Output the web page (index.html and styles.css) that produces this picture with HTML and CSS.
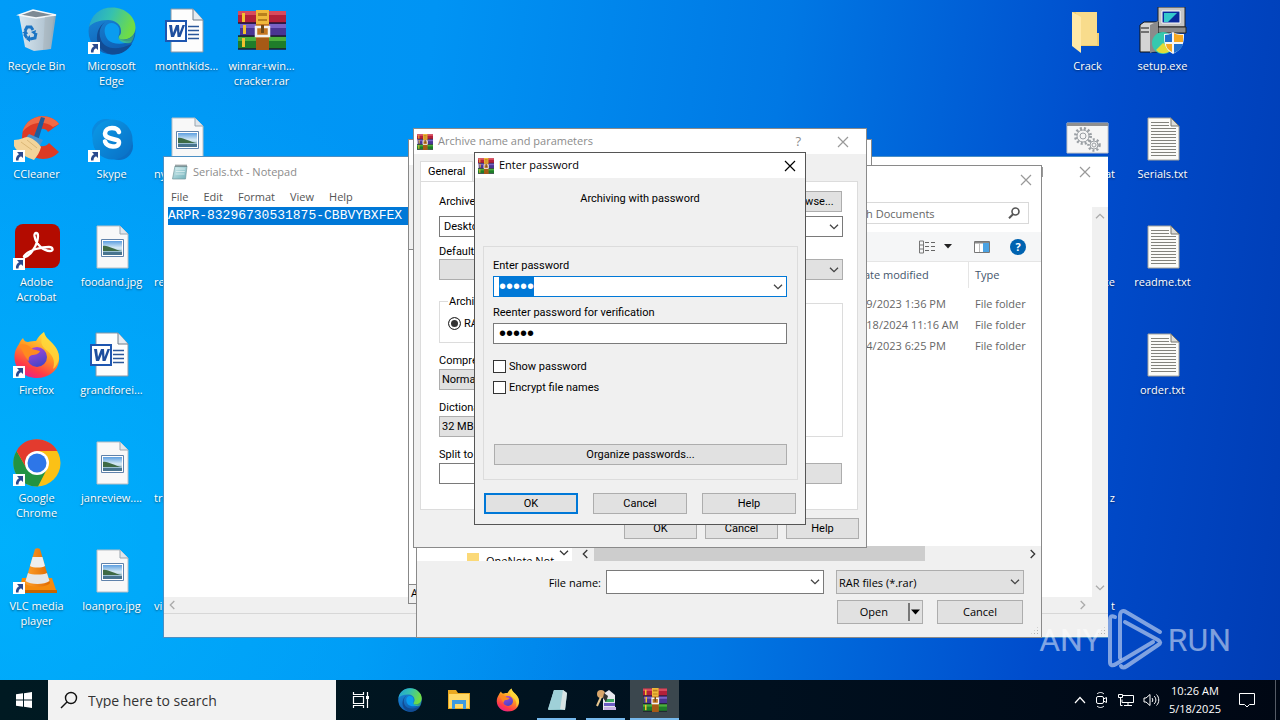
FILE: index.html
```
<!DOCTYPE html>
<html lang="en">

<head>
    <meta charset="UTF-8">
    <meta name="viewport" content="width=device-width, initial-scale=1.0">
    <title>Desktop</title>
    <link rel="stylesheet" href="styles.css">
</head>

<body>
    <!-- shared icons -->
    <svg class="sprite" aria-hidden="true">
        <defs>
            <linearGradient id="edgeA" x1="0" y1="0" x2="1" y2="0.3">
                <stop offset="0" stop-color="#1f9fd8"/>
                <stop offset="0.5" stop-color="#35c1b0"/>
                <stop offset="1" stop-color="#6fdc46"/>
            </linearGradient>
            <linearGradient id="edgeB" x1="0" y1="0" x2="0.4" y2="1">
                <stop offset="0" stop-color="#1b8ddc"/>
                <stop offset="1" stop-color="#0f5fb4"/>
            </linearGradient>
            <linearGradient id="foxA" x1="0.8" y1="0" x2="0.3" y2="1">
                <stop offset="0" stop-color="#fff04a"/>
                <stop offset="0.45" stop-color="#ff9a22"/>
                <stop offset="0.8" stop-color="#ff3b47"/>
                <stop offset="1" stop-color="#e8208c"/>
            </linearGradient>
            <linearGradient id="foxB" x1="0" y1="0" x2="0.4" y2="1">
                <stop offset="0" stop-color="#b646d8"/>
                <stop offset="1" stop-color="#4a45c8"/>
            </linearGradient>
            <linearGradient id="skypeA" x1="0" y1="0" x2="1" y2="1">
                <stop offset="0" stop-color="#0a9be8"/>
                <stop offset="1" stop-color="#0a6ec4"/>
            </linearGradient>
            <linearGradient id="skyA" x1="0" y1="0" x2="0" y2="1">
                <stop offset="0" stop-color="#5d9fe0"/>
                <stop offset="0.5" stop-color="#d8ebf5"/>
                <stop offset="1" stop-color="#5f93ad"/>
            </linearGradient>
            <linearGradient id="binA" x1="0" y1="0" x2="1" y2="0">
                <stop offset="0" stop-color="#e9edf0"/>
                <stop offset="0.65" stop-color="#c6ccd2"/>
                <stop offset="1" stop-color="#98a5b0"/>
            </linearGradient>
            <linearGradient id="padA" x1="0" y1="0" x2="1" y2="1">
                <stop offset="0" stop-color="#d3eef0"/>
                <stop offset="1" stop-color="#6fb0b9"/>
            </linearGradient>
            <linearGradient id="coneA" x1="0" y1="0" x2="1" y2="0">
                <stop offset="0" stop-color="#ffa02c"/>
                <stop offset="1" stop-color="#e06a00"/>
            </linearGradient>
        </defs>

        <symbol id="i-shortcut" viewBox="0 0 12 12">
            <path d="M0 0h12v12H0z" fill="#fff"/>
            <path d="M4 2h6v6L8 6.200C6.300 7 5.500 8.200 5.500 10.500H3C2.500 7.500 4 5.400 6 4.200z" fill="#2b4a8f"/>
        </symbol>

        <symbol id="i-bin" viewBox="0 0 48 48">
            <path d="M6 8 20 3l23 5-5 34-17 2-9-4z" fill="url(#binA)" opacity="0.92"/>
            <path d="M6 8 20 3l23 5-20 3z" fill="#7d8a94"/>
            <path d="M6 8 20 3l23 5-20 3z" fill="none" stroke="#f5f8fa" stroke-width="1.500"/>
            <path d="M32 10l9-1-5 33-6 1z" fill="#aab5bd" opacity="0.6"/>
            <g fill="none" stroke="#1c75c4" stroke-width="3">
                <path d="M12 24l2-4 4 0 2 3"/>
                <path d="M23 26l-1 5-5 1"/>
                <path d="M14 31l-2-3 1-3"/>
            </g>
            <path d="M18 25l5-2-1 5zM17 28v7l-4-3zM9 26l4-3 2 4z" fill="#1c75c4"/>
        </symbol>

        <symbol id="i-edge" viewBox="0 0 48 48">
            <circle cx="24" cy="24" r="23.500" fill="url(#edgeB)"/>
            <path d="M1 20C3 8 12 .500 24 .500c14 0 23.500 10 23.500 20 0 8-6 12-12 12-5 0-6-2-4-4 1-1 1.500-2.500 1.500-4.500 0-7-6-11-13-11C11 13 4 16 1 20z" fill="url(#edgeA)"/>
            <path d="M17 15c-5 4-7 11-4 18 4 9 15 11 31 4C38 46 28 50 19 46 10 42 7 33 10 24c1.500-4 4-7 7-9z" fill="#124c94"/>
            <path d="M31 21c-2-5-8-6-11-4-5 3-4 11 0 16 4 4 13 5 24 1.500C39 35 34 34 30.500 31c-1-1 2-4 .500-10z" fill="#0a9cf0"/>
            <path d="M31.500 28c-1.500 2 0 4.500 4 4.500 4.500 0 9-2 11-6-1 5-2 8-4 9.500-6 1-10-1-12-4z" fill="#5fd34c" opacity="0.500"/>
        </symbol>

        <symbol id="i-word" viewBox="3 0 48 48">
            <path d="M11 2h22l10 11v32H11z" fill="#fdfdfd" stroke="#8a97a5"/>
            <path d="M33 2v11h10" fill="#e6ebf0" stroke="#6f7c8a"/>
            <path d="M28 19.500h11M28 23.500h11M28 27.500h11M28 31.500h11" stroke="#2b579a" stroke-width="1.500"/>
            <path d="M5 13h22v22H5z" fill="#1e56b0"/>
            <path d="M7 15h18v18H7z" fill="#fff"/>
            <path d="M9 18h3l1 8 3-8h3l.500 8 3-8h2.500l-4.500 12h-3l-.500-7-3 7h-3z" fill="#1e4e9e"/>
        </symbol>

        <symbol id="i-rar" viewBox="0 0 48 40" preserveAspectRatio="none">
            <path d="M0 1h48v12H0z" fill="#b3203a"/>
            <path d="M0 1h48v4H0z" fill="#d84a5c"/>
            <path d="M2 13h46v13H2z" fill="#4a3592"/>
            <path d="M2 14h46v4H2z" fill="#7a62c4"/>
            <path d="M0 26h48v13H0z" fill="#1f7d2a"/>
            <path d="M0 27h48v4H0z" fill="#4caf3c"/>
            <path d="M4 3h3v9H4zM5 15h3v9H5zM4 28h3v9H4z" fill="#f2c22e"/>
            <path d="M0 12h48v2H0zM0 25h48v2H0zM0 38h48v2H0z" fill="#1d1230" opacity="0.700"/>
            <path d="M18 0h13v40H18z" fill="#c4761f"/>
            <path d="M18 0h13v14H18z" fill="#f0b93a"/>
            <path d="M18 28h13v12H18z" fill="#a65a16"/>
            <path d="M20 3h9v3h-9zM20 9h9v2h-9z" fill="#b8801c"/>
            <path d="M18 17h13v9H18z" fill="none" stroke="#f1f1f1" stroke-width="2.500"/>
            <path d="M24.500 15v8" stroke="#6d4a1a" stroke-width="3"/>
        </symbol>

        <symbol id="i-ccleaner" viewBox="0 0 48 48">
            <path d="M46 9C40 0 24-2 15 7c-8 8-8 23 0 31 8 8 23 8 31-1l-10-9c-4 5-11 4-13-1-2-4-2-8 1-11 3-3 9-3 11 1z" fill="#dd3a24"/>
            <path d="M46 9C40 0 24-2 15 7c-3 3-5 7-5.500 10C16 8 30 4 40 12z" fill="#f06a45"/>
            <path d="M28 2l4 1-8 26-5-2z" fill="#1f5c9c"/>
            <path d="M16 19l14 6-5 9-14-9z" fill="#4a93cf"/>
            <path d="M1 25c7 0 10-3 13-3 4 0 12 6 14 10-1 5-4 9-7 13-6-2-17-7-20-14z" fill="#f3d49a"/>
            <path d="M8 27l11 8M14 25l10 8" stroke="#dab777" fill="none"/>
        </symbol>

        <symbol id="i-skype" viewBox="0 0 48 48">
            <circle cx="18" cy="18" r="14" fill="#0a8ade"/>
            <circle cx="31" cy="31" r="14" fill="#0b6fc4"/>
            <circle cx="24.500" cy="24.500" r="20" fill="url(#skypeA)"/>
            <path d="M31 17c-1-3-4-4-7-4-4 0-7 2-7 5.500 0 7 14 4 14 9 0 6-12 5-14-1" fill="none" stroke="#fff" stroke-width="4.500" stroke-linecap="round"/>
        </symbol>

        <symbol id="i-picture" viewBox="0 0 48 48">
            <path d="M9 3h23l8 8v34H9z" fill="#f8f8f8" stroke="#b8bec4"/>
            <path d="M32 3v8h8" fill="#dfe6ec" stroke="#9aa5ae"/>
            <path d="M13.500 16.500h22v17h-22z" fill="#fff" stroke="#5f82ab"/>
            <path d="M15 18h19v14H15z" fill="url(#skyA)"/>
            <path d="M15 23c5-1 11 4 19 5H15z" fill="#3e6a45"/>
            <path d="M15 29h19v3H15z" fill="#48748f"/>
        </symbol>

        <symbol id="i-text" viewBox="0 0 48 48">
            <path d="M9 3h23l8 8v34H9z" fill="#fbfbf8" stroke="#a3a39c"/>
            <path d="M32 3v8h8z" fill="#dcdcd8" stroke="#77776f"/>
            <path d="M12 7.500h18M12 10.500h18M12 13.500h25M12 16.500h25M12 19.500h25M12 22.500h25M12 25.500h25M12 28.500h25M12 31.500h25M12 34.500h25M12 37.500h25M12 40.500h25" stroke="#83837c"/>
        </symbol>

        <symbol id="i-acrobat" viewBox="0 0 48 48">
            <rect x="2" y="1" width="45" height="44" rx="8" fill="#b30b00"/>
            <path d="M12 34c5-1 13-12 13-21 0-4-4-4-3.500 0C23 22 31 28 37 28c4 0 3-4-1-4-8 0-19 3-23 7-2 2-3 3-1 3z" fill="none" stroke="#fff" stroke-width="2.300"/>
        </symbol>

        <symbol id="i-firefox" viewBox="0 0 48 48">
            <path d="M6 13c1-3 3-5 4-6 1 3 3 4 5 4 3-1 6-1 8-1 2-4 5-7 8-9 1 5 4 7 8 11 5 5 8 11 7 18-1 10-11 17-22 17C11 47 2 38 1.500 27 1.300 20 4 16 6 13z" fill="url(#foxA)"/>
            <path d="M31 1c1 5 4 7 8 11 5 5 7 10 7 16-1 4-3 8-6 10 3-9-1-15-8-20-3-3-6-7-1-17z" fill="#ffd93b" opacity="0.800"/>
            <circle cx="24" cy="26" r="10" fill="url(#foxB)"/>
            <path d="M6 14c5-2 10 0 13 4l8 2c-1 3-5 4-8 4-3 1-4 3-3 6-4-3-6-10-10-16z" fill="#ff8a1f"/>
        </symbol>

        <symbol id="i-chrome" viewBox="0 0 48 48">
            <circle cx="24" cy="24" r="23.500" fill="#fbc116"/>
            <path d="M3.600 12A23.500 23.500 0 0 0 25 47.500L34 30 14 30z" fill="#229342"/>
            <path d="M3.600 12 14 30l10-18h20.400C36-3 12-4 3.600 12z" fill="#e33b2e"/>
            <circle cx="24" cy="24" r="12" fill="#fff"/>
            <circle cx="24" cy="24" r="9.500" fill="#2d76e8"/>
        </symbol>

        <symbol id="i-vlc" viewBox="0 0 48 48">
            <path d="M9 31h30l5 15H6z" fill="#f58a0c"/>
            <path d="M6 43h38v3H6z" fill="#c96500"/>
            <path d="M22 2c1-1 4-1 5 0l10 34c-4 5-21 5-25 0z" fill="url(#coneA)"/>
            <path d="M19.500 10h10l2.500 9c-3 2-12 2-15 0z" fill="#eee"/>
            <path d="M15 26c4 2 15 2 19 0l2.500 8c-5 4-19 4-24 0z" fill="#e6e6e6"/>
        </symbol>

        <symbol id="i-folder" viewBox="0 0 48 48">
            <path d="M8 5h25v21h2v13H16z" fill="#f0cf72"/>
            <path d="M12 5h21v33H14z" fill="#f8dc8c"/>
            <path d="M8 5l9 5v36l-9-7z" fill="#ffe9a8"/>
        </symbol>

        <symbol id="i-setup" viewBox="0 0 48 48">
            <path d="M19 0h27v20H19z" fill="#c4c4c4" stroke="#222"/>
            <path d="M23 4h18v12H23z" fill="#0a2a9c" stroke="#fff"/>
            <path d="M25 6h13l-9 9h-4z" fill="#35c8cc"/>
            <path d="M17 20h30v6H17z" fill="#8a8a8a" stroke="#222"/>
            <path d="M1 18l4-3h14v30H1z" fill="#d4d4d4" stroke="#111"/>
            <path d="M11 18l8-4v29l-8 3z" fill="#8b8b8b"/>
            <path d="M2 21h8M2 25h8" stroke="#111"/>
            <circle cx="24" cy="36" r="11" fill="#36c9ae"/>
            <path d="M24 36l9 6c-5 6-13 5-16 1z" fill="#e4dc38"/>
            <path d="M25 27c4 0 7-1 9-2 3 2 6 2 11 2 0 9-1 15-11 20-9-5-9-12-9-20z" fill="#f4f4f4"/>
            <path d="M26 28c3 0 5-1 7-2v9h-7z" fill="#1f6fd0"/>
            <path d="M35 26c3 2 6 2 9 2v7h-9zM27 37h6v8c-4-2-6-5-6-8z" fill="#f6a821"/>
            <path d="M35 37h9c-1 4-4 7-9 9z" fill="#1f6fd0"/>
        </symbol>

        <symbol id="i-batch" viewBox="0 0 48 48">
            <path d="M3 8h41v30H3z" fill="#f5f5f5" stroke="#c7c7c7"/>
            <path d="M3 8h41v3H3z" fill="#8f8f8f"/>
            <g fill="none" stroke="#9a9fa4">
                <circle cx="19" cy="21" r="7.500" stroke-width="3" stroke-dasharray="2 2"/>
                <circle cx="19" cy="21" r="6"/>
                <circle cx="19" cy="21" r="3"/>
                <circle cx="30" cy="30" r="5.500" stroke-width="2.500" stroke-dasharray="2 2"/>
                <circle cx="30" cy="30" r="4"/>
                <circle cx="30" cy="30" r="2"/>
            </g>
        </symbol>

        <symbol id="i-notepad" viewBox="0 0 16 16">
            <path d="M3 2h12l-1.500 13H.500z" fill="url(#padA)" stroke="#73979b" stroke-width="0.700"/>
            <path d="M4 5h9M3.800 7.500h9M3.500 10h9" stroke="#f0fafa" stroke-width="0.600"/>
            <path d="M4 .500v2.500M6 .500v2.500M8 .500v2.500M10 .500v2.500M12 .500v2.500M14 .500v2.500" stroke="#4c5658" stroke-width="0.800"/>
        </symbol>

        <symbol id="i-close" viewBox="0 0 12 12">
            <path d="M1 1l10 10M11 1L1 11" fill="none" stroke="currentColor" stroke-width="1.200"/>
        </symbol>

        <symbol id="i-down" viewBox="0 0 10 6">
            <path d="M1 .700l4 4 4-4" fill="none" stroke="currentColor" stroke-width="1.300"/>
        </symbol>
    </svg>

    <main class="desktop">
        <ul class="icons icons-left">
            <li><svg><use href="#i-bin"/></svg><span>Recycle Bin</span></li>
            <li><svg><use href="#i-ccleaner"/></svg><svg class="shortcut"><use href="#i-shortcut"/></svg><span>CCleaner</span></li>
            <li><svg><use href="#i-acrobat"/></svg><svg class="shortcut"><use href="#i-shortcut"/></svg><span>Adobe Acrobat</span></li>
            <li><svg><use href="#i-firefox"/></svg><svg class="shortcut"><use href="#i-shortcut"/></svg><span>Firefox</span></li>
            <li><svg><use href="#i-chrome"/></svg><svg class="shortcut"><use href="#i-shortcut"/></svg><span>Google Chrome</span></li>
            <li><svg><use href="#i-vlc"/></svg><svg class="shortcut"><use href="#i-shortcut"/></svg><span>VLC media player</span></li>

            <li><svg><use href="#i-edge"/></svg><svg class="shortcut"><use href="#i-shortcut"/></svg><span>Microsoft Edge</span></li>
            <li><svg><use href="#i-skype"/></svg><svg class="shortcut"><use href="#i-shortcut"/></svg><span>Skype</span></li>
            <li><svg><use href="#i-picture"/></svg><span>foodand.jpg</span></li>
            <li><svg><use href="#i-word"/></svg><span>grandforei...</span></li>
            <li><svg><use href="#i-picture"/></svg><span>janreview....</span></li>
            <li><svg><use href="#i-picture"/></svg><span>loanpro.jpg</span></li>

            <li><svg><use href="#i-word"/></svg><span>monthkids...</span></li>
            <li><svg><use href="#i-picture"/></svg><span class="from-left">ny</span></li>
            <li><span class="from-left">re</span></li>
            <li></li>
            <li><span class="from-left">tru</span></li>
            <li><span class="from-left">vi</span></li>

            <li><svg class="wide"><use href="#i-rar"/></svg><span>winrar+win... cracker.rar</span></li>
        </ul>

        <ul class="icons icons-right">
            <li><svg><use href="#i-folder"/></svg><span>Crack</span></li>
            <li><svg><use href="#i-batch"/></svg><span class="from-right">at</span></li>
            <li><span class="from-right">xe</span></li>
            <li></li>
            <li><span class="from-right">z</span></li>
            <li><span class="from-right">t</span></li>

            <li><svg><use href="#i-setup"/></svg><span>setup.exe</span></li>
            <li><svg><use href="#i-text"/></svg><span>Serials.txt</span></li>
            <li><svg><use href="#i-text"/></svg><span>readme.txt</span></li>
            <li><svg><use href="#i-text"/></svg><span>order.txt</span></li>
        </ul>

        <!-- Notepad -->
        <section class="window notepad">
            <header class="titlebar">
                <svg class="app-icon"><use href="#i-notepad"/></svg>
                <h2>Serials.txt - Notepad</h2>
                <button class="maximize" aria-label="Maximize"></button>
                <button class="close" aria-label="Close"><svg><use href="#i-close"/></svg></button>
            </header>
            <nav class="menubar">
                <button>File</button>
                <button>Edit</button>
                <button>Format</button>
                <button>View</button>
                <button>Help</button>
            </nav>
            <div class="editor">
                <textarea aria-label="Text" spellcheck="false" wrap="off">ARPR-83296730531875-CBBVYBXFEX</textarea>
                <div class="scroll-y">
                    <svg class="flip"><use href="#i-down"/></svg>
                    <svg><use href="#i-down"/></svg>
                </div>
            </div>
            <div class="scroll-x">
                <svg class="turn-left"><use href="#i-down"/></svg>
                <svg class="turn-right"><use href="#i-down"/></svg>
            </div>
            <footer class="statusbar"></footer>
            <i class="grip"></i>
        </section>

        <!-- WinRAR main window, mostly covered -->
        <section class="window winrar">
            <div class="winrar-title"></div>
            <div class="winrar-tools"></div>
            <div class="winrar-list"></div>
            <div class="winrar-status">A</div>
        </section>

        <!-- Browse for archive -->
        <section class="window browse">
            <header class="titlebar">
                <button class="close" aria-label="Close"><svg><use href="#i-close"/></svg></button>
            </header>
            <div class="address">
                <div class="search">
                    <input type="text" placeholder="Search Documents" aria-label="Search Documents">
                    <svg viewBox="0 0 12 12"><circle cx="7.500" cy="4.500" r="3.500" fill="none" stroke="#555" stroke-width="1.600"/><path d="M5 7.200 1 11.200" stroke="#555" stroke-width="2"/></svg>
                </div>
            </div>
            <div class="toolbar">
                <button aria-label="Change view">
                    <svg width="17" height="14" viewBox="0 0 17 14"><path d="M.500 1h4v12h-4zM.500 5h4M.500 9h4" fill="none" stroke="#777"/><path d="M6 2.500h4M12 2.500h4M6 6.500h4M12 6.500h4M6 10.500h4M12 10.500h4" stroke="#666"/></svg>
                </button>
                <button aria-label="More views"><svg width="8" height="5" viewBox="0 0 8 5"><path d="M0 0h8L4 4.500z" fill="#222"/></svg></button>
                <button class="pane" aria-label="Preview pane">
                    <svg width="16" height="12" viewBox="0 0 16 12"><path d="M.500.500h15v11H.500z" fill="#fff" stroke="#777"/><path d="M1 1h14v1.500H1z" fill="#888"/><path d="M9 2h6v9H9z" fill="#4ba3e3"/><path d="M5.500 2v9" stroke="#bbb"/></svg>
                </button>
                <button class="help" aria-label="Help">?</button>
            </div>
            <div class="files">
                <div class="tree">
                    <div class="tree-item"><i></i>OneNote Not</div>
                    <svg><use href="#i-down"/></svg>
                </div>
                <table>
                    <thead>
                        <tr><th>Name</th><th>Date modified</th><th>Type</th></tr>
                    </thead>
                    <tbody>
                        <tr><td></td><td>1/9/2023 1:36 PM</td><td>File folder</td></tr>
                        <tr><td></td><td>1/18/2024 11:16 AM</td><td>File folder</td></tr>
                        <tr><td></td><td>1/4/2023 6:25 PM</td><td>File folder</td></tr>
                    </tbody>
                </table>
                <div class="files-scroll">
                    <svg class="turn-left"><use href="#i-down"/></svg>
                    <div class="thumb"></div>
                    <svg class="turn-right"><use href="#i-down"/></svg>
                </div>
            </div>
            <div class="file-row">
                <label for="filename">File name:</label>
                <div class="combo file-name">
                    <input type="text" id="filename">
                    <svg><use href="#i-down"/></svg>
                </div>
                <div class="combo file-type">
                    <select aria-label="File type"><option>RAR files (*.rar)</option></select>
                    <svg><use href="#i-down"/></svg>
                </div>
            </div>
            <div class="file-actions">
                <button class="btn open">Open<svg width="14" height="18" viewBox="0 0 14 18"><path d="M1 0v18" stroke="#555" stroke-width="1.500"/><path d="M3 6.500h9L7.500 11.500z" fill="#000"/></svg></button>
                <button class="btn">Cancel</button>
            </div>
            <i class="grip"></i>
        </section>

        <!-- Archive name and parameters -->
        <section class="window dialog archive">
            <header class="titlebar">
                <svg class="app-icon"><use href="#i-rar"/></svg>
                <h2>Archive name and parameters</h2>
                <button class="question" aria-label="What's this">?</button>
                <button class="close" aria-label="Close"><svg><use href="#i-close"/></svg></button>
            </header>
            <div class="tabs"><button>General</button></div>
            <div class="page">
                <div class="line name-line">
                    <label for="archname">Archive name</label>
                    <button class="btn">Browse...</button>
                </div>
                <div class="combo">
                    <input type="text" id="archname" value="Desktop">
                    <svg><use href="#i-down"/></svg>
                </div>
                <div class="caption">Default Profile</div>
                <div class="line">
                    <button class="btn profile" aria-label="Profiles"></button>
                    <div class="combo update">
                        <select aria-label="Update mode"><option></option></select>
                        <svg><use href="#i-down"/></svg>
                    </div>
                </div>
                <div class="columns">
                    <div class="col">
                        <fieldset>
                            <legend>Archive format</legend>
                            <label><input type="radio" name="format" checked>RAR</label>
                        </fieldset>
                        <label for="method">Compression method</label>
                        <div class="combo"><select id="method"><option>Normal</option></select></div>
                        <label for="dict">Dictionary size</label>
                        <div class="combo"><select id="dict"><option>32 MB</option></select></div>
                        <label for="split">Split to volumes, size</label>
                        <div class="combo"><input type="text" id="split"></div>
                    </div>
                    <div class="col">
                        <div class="options"></div>
                        <button class="btn" aria-label="Set password"></button>
                    </div>
                </div>
            </div>
            <footer>
                <button class="btn">OK</button>
                <button class="btn">Cancel</button>
                <button class="btn">Help</button>
            </footer>
        </section>

        <!-- Enter password -->
        <section class="window dialog password">
            <header class="titlebar">
                <svg class="app-icon"><use href="#i-rar"/></svg>
                <h2>Enter password</h2>
                <button class="close" aria-label="Close"><svg><use href="#i-close"/></svg></button>
            </header>
            <p>Archiving with password</p>
            <div class="group">
                <label for="pass">Enter password</label>
                <div class="combo">
                    <input type="password" id="pass" value="12345">
                    <svg><use href="#i-down"/></svg>
                </div>
                <label for="again">Reenter password for verification</label>
                <input type="password" id="again" value="12345">
                <label class="check"><input type="checkbox">Show password</label>
                <label class="check"><input type="checkbox">Encrypt file names</label>
                <button class="btn organize">Organize passwords...</button>
            </div>
            <footer>
                <button class="btn default">OK</button>
                <button class="btn">Cancel</button>
                <button class="btn">Help</button>
            </footer>
        </section>

        <div class="watermark">
            <span>ANY</span>
            <svg width="56" height="64" viewBox="0 0 56 64" fill="none" stroke="currentColor" stroke-width="4" stroke-linejoin="round" stroke-linecap="round">
                <path d="M8 9C4 7 3 9 3 12v42c0 4 3 4 6 2l37-22"/>
                <path d="M13 50V8c0-5 3-6 6-4l34 20"/>
                <path d="M18 14l33 18c3 2 3 3 0 5L20 58c-3 2-5 2-6 0"/>
            </svg>
            <span>RUN</span>
        </div>
    </main>

    <footer class="taskbar">
        <button class="start" aria-label="Start">
            <svg width="16" height="16" viewBox="0 0 16 16"><path d="M0 2.300 7 1.300v6.200H0zM8 1.200 16 0v7.500H8zM0 8.500h7v6.200l-7-1zM8 8.500h8V16l-8-1.200z" fill="#fff"/></svg>
        </button>
        <label class="task-search">
            <svg width="18" height="18" viewBox="0 0 18 18"><circle cx="11" cy="7" r="5.500" fill="none" stroke="#111" stroke-width="1.400"/><path d="M7 11 1 17" stroke="#111" stroke-width="1.400"/></svg>
            <input type="text" placeholder="Type here to search" aria-label="Search">
        </label>
        <button aria-label="Task view">
            <svg width="18" height="16" viewBox="0 0 18 16"><path d="M1.500 4.500h10v7h-10zM1.500 0v2.500h10V0M1.500 16v-2.500h10V16M15.500 0v16" fill="none" stroke="#fff" stroke-width="1.200"/><path d="M14 4h3v3h-3z" fill="#fff"/></svg>
        </button>
        <button aria-label="Edge"><svg width="24" height="24"><use href="#i-edge"/></svg></button>
        <button aria-label="File Explorer">
            <svg width="22" height="20" viewBox="0 0 22 20"><path d="M0 0h8l2 3h12v16H0z" fill="#e9a820"/><path d="M1 4h20v14H1z" fill="#ffd968"/><path d="M4 10h14v9h-3v-5H7v5H4z" fill="#3d9ae0"/></svg>
        </button>
        <button aria-label="Firefox"><svg width="24" height="24"><use href="#i-firefox"/></svg></button>
        <button class="running" aria-label="Notepad">
            <svg width="22" height="22" viewBox="0 0 22 22"><path d="M8 1h9l4 3-2 17H2z" fill="url(#padA)"/><path d="M8 1h9l-3 19H2z" fill="#9fd0d8"/><path d="M17 1l4 3-2 17-5-1z" fill="#d8e4e4"/></svg>
        </button>
        <button class="running" aria-label="Password recovery">
            <svg width="22" height="22" viewBox="0 0 22 22"><path d="M8 5l6-4 6 5v15H8z" fill="#e8e8ee"/><path d="M10 10h9v3h-9z" fill="#3fa860"/><path d="M9 14h11v3H9z" fill="#6c5cc4"/><path d="M9 18h12v3H9z" fill="#c9b4e4"/><circle cx="6" cy="5" r="4" fill="#d8a56a"/><path d="M6 8 2 17" stroke="#e8c890" stroke-width="2"/><path d="M9 4l4 3-2 6-3-4z" fill="#333"/></svg>
        </button>
        <button class="running active" aria-label="WinRAR"><svg width="24" height="24"><use href="#i-rar"/></svg></button>

        <div class="tray">
            <svg width="12" height="8" viewBox="0 0 12 8"><path d="M1 7l5-5.500L11 7" fill="none" stroke="#fff" stroke-width="1.200"/></svg>
            <svg width="14" height="16" viewBox="0 0 14 16" fill="none" stroke="#fff"><rect x="1.500" y="4.500" width="7" height="7" rx="1.500"/><path d="M8.500 7l3-1.500v5L8.500 9M2 2c2-2 5-2 7 0M2 14c2 2 5 2 7 0" /></svg>
            <svg width="16" height="14" viewBox="0 0 16 14" fill="none" stroke="#fff"><path d="M5 2.500h10.500v7H4v-3M10 9.500v3M6 12.500h8M.500 1.500h4v3h-4zM2.500 4.500v8h2"/></svg>
            <svg width="17" height="14" viewBox="0 0 17 14" fill="none" stroke="#fff"><path d="M1 5v4h2l4 3.500v-11L3 5zM9 5c1 1 1 3 0 4M11 3c2.500 2 2.500 6 0 8M13.500 1.500c3 3 3 8 0 11"/></svg>
            <div class="clock"><span>10:26 AM</span><span>5/18/2025</span></div>
            <svg class="notes" width="16" height="16" viewBox="0 0 16 16" fill="none" stroke="#fff"><path d="M.500 1.500h15v11h-5L8 15l-2.500-2.500h-5z"/></svg>
        </div>
    </footer>

    <script>
        document.querySelector("#pass").focus()
        document.querySelector("#pass").select()
    </script>
</body>

</html>
```
FILE: styles.css
```
* {
    box-sizing: border-box;
}

body {
    margin: 0;
    height: 100vh;
    display: flex;
    flex-direction: column;
    overflow: hidden;
    font-family: "Open Sans", "Noto Sans", sans-serif;
    font-size: 11px;
    line-height: 15px;
    color: #000;
}

button,
input,
select,
textarea {
    font: inherit;
    color: inherit;
    margin: 0;
    padding: 0;
    border: none;
    border-radius: 0;
    background: none;
    outline: none;
}

h2,
p,
ul {
    margin: 0;
    padding: 0;
    font-size: 11px;
    font-weight: normal;
}

.sprite {
    position: absolute;
    width: 0;
    height: 0;
}

/* desktop */

.desktop {
    flex: 1;
    position: relative;
    overflow: hidden;
    background:
        radial-gradient(ellipse 600px 500px at 0 80%, rgba(0, 190, 255, 0.6), rgba(0, 190, 255, 0)),
        linear-gradient(97deg, #009cf8 0%, #0094f4 32%, #0078e4 58%, #004ccc 82%, #003cb4 100%);
}

.icons {
    position: absolute;
    top: 0;
    display: grid;
    grid-auto-flow: column;
    grid-template-rows: repeat(6, 108px);
    grid-auto-columns: 75px;
    list-style: none;
    color: #fff;
    text-align: center;
    text-shadow: 0 1px 2px rgba(0, 0, 0, 0.5);
}

.icons-left {
    left: -1px;
}

.icons-right {
    right: 80px;
}

.icons li {
    position: relative;
    padding-top: 58px;
}

.icons li > svg {
    position: absolute;
    top: 7px;
    left: 14px;
    width: 48px;
    height: 48px;
}

.icons li > .shortcut {
    top: 42px;
    width: 12px;
    height: 12px;
}

.icons li > .wide {
    top: 10px;
    height: 40px;
}

.icons span {
    display: block;
}

.icons .from-left {
    text-align: left;
    padding-left: 5px;
}

.icons .from-right {
    text-align: right;
    padding-right: 10px;
}

/* windows */

.window {
    position: absolute;
    display: flex;
    flex-direction: column;
    background: #f0f0f0;
}

.dialog {
    font-family: "Roboto", "Open Sans", sans-serif;
}

.titlebar {
    display: flex;
    align-items: center;
    gap: 5px;
    height: 25px;
    padding: 0 9px 0 3px;
    background: #fff;
    color: #8c8c8c;
    font-family: "Open Sans", "Noto Sans", sans-serif;
}

.titlebar h2 {
    flex: 1;
    padding-bottom: 2px;
}

.app-icon {
    width: 16px;
    height: 16px;
}

.close {
    display: flex;
    margin-left: auto;
    color: #999;
}

.close svg {
    width: 12px;
    height: 12px;
}

.flip {
    transform: rotate(180deg);
}

.turn-left {
    transform: rotate(90deg);
}

.turn-right {
    transform: rotate(-90deg);
}

.grip {
    position: absolute;
    right: 2px;
    bottom: 2px;
    width: 9px;
    height: 9px;
    background: radial-gradient(circle, #b0b0b0 1px, transparent 1px) 0 0 / 3px 3px;
    clip-path: polygon(100% 0, 100% 100%, 0 100%);
}

.btn {
    height: 21px;
    border: 1px solid #adadad;
    background: #e1e1e1;
    text-align: center;
}

.combo {
    position: relative;
    display: flex;
    height: 21px;
}

.combo input,
.combo select {
    flex: 1;
    min-width: 0;
    width: 100%;
    padding: 0 4px;
    border: 1px solid #7a7a7a;
    background: #fff;
}

.combo select {
    appearance: none;
    border-color: #adadad;
    padding: 0 2px;
    background: #e1e1e1;
}

.combo svg {
    position: absolute;
    top: 8px;
    right: 4px;
    width: 10px;
    height: 6px;
    color: #444;
    pointer-events: none;
}

/* notepad */

.notepad {
    left: 163px;
    top: 156px;
    width: 945px;
    height: 482px;
    border: 1px solid #4b8fc4;
    border-right: none;
}

.notepad .titlebar {
    height: 30px;
    padding: 0 17px 0 8px;
}

.maximize {
    width: 10px;
    height: 10px;
    margin-right: 31px;
    border: 1px solid #999;
}

.menubar {
    display: flex;
    gap: 15px;
    height: 20px;
    padding: 0 7px 2px;
    background: #fff;
    color: #555;
}

.editor {
    flex: 1;
    display: flex;
    min-height: 0;
    padding-left: 4px;
    background: #fff;
}

.editor textarea {
    flex: 1;
    resize: none;
    overflow: hidden;
    background: linear-gradient(#0078d7, #0078d7) 0 0 / 300px 18px no-repeat;
    color: #fff;
    font-family: "Liberation Mono", monospace;
    font-size: 13px;
    line-height: 18px;
}

.scroll-y {
    display: flex;
    flex-direction: column;
    justify-content: space-between;
    align-items: center;
    width: 16px;
    padding: 6px 0;
    background: #f0f0f0;
    color: #aaa;
}

.scroll-x {
    display: flex;
    justify-content: space-between;
    align-items: center;
    height: 16px;
    padding: 0 20px 0 3px;
    color: #aaa;
}

.scroll-y svg,
.scroll-x svg,
.files-scroll svg,
.tree svg {
    width: 10px;
    height: 6px;
}

.statusbar {
    height: 24px;
    border-top: 1px solid #d7d7d7;
}

/* winrar main window */

.winrar {
    left: 408px;
    top: 139px;
    width: 464px;
    height: 465px;
    border: 1px solid #888;
}

.winrar-title {
    height: 25px;
    background: #fff;
}

.winrar-tools {
    height: 85px;
    border-bottom: 1px solid #888;
}

.winrar-list {
    flex: 1;
    background: #fff;
}

.winrar-status {
    height: 19px;
    padding-left: 2px;
    border-top: 1px solid #888;
}

/* browse dialog */

.browse {
    left: 416px;
    top: 165px;
    width: 626px;
    border: 1px solid #8a8a8a;
}

.browse .titlebar {
    height: 28px;
}

.address {
    display: flex;
    justify-content: flex-end;
    padding: 8px 12px;
    background: #fff;
}

.search {
    display: flex;
    align-items: center;
    width: 200px;
    height: 22px;
    padding: 0 8px;
    border: 1px solid #d9d9d9;
    color: #666;
}

.search input {
    flex: 1;
    min-width: 0;
}

.search input::placeholder,
.task-search input::placeholder {
    color: inherit;
    opacity: 1;
}

.search svg {
    width: 12px;
    height: 12px;
}

.toolbar {
    display: flex;
    align-items: center;
    justify-content: flex-end;
    height: 30px;
    padding-right: 15px;
    border-bottom: 1px solid #e5e5e5;
    background: #f5f6f7;
}

.toolbar button {
    display: flex;
    margin-left: 8px;
}

.toolbar .pane {
    margin-left: 22px;
}

.toolbar .help {
    justify-content: center;
    align-items: center;
    width: 16px;
    height: 16px;
    margin-left: 20px;
    border-radius: 50%;
    background: #0063b1;
    color: #fff;
    font-weight: bold;
}

.files {
    display: grid;
    grid-template-columns: 155px 1fr;
    grid-template-rows: 284px 15px;
    background: #fff;
}

.tree {
    grid-row: 1 / 3;
    position: relative;
    display: flex;
    align-items: flex-end;
    overflow: hidden;
    background: #fff;
}

.tree-item {
    display: flex;
    gap: 7px;
    height: 8px;
    padding-left: 50px;
}

.tree-item i {
    width: 12px;
    height: 10px;
    background: #fbd978;
}

.tree svg {
    position: absolute;
    right: 3px;
    bottom: 5px;
    color: #333;
}

.files table {
    justify-self: end;
    align-self: start;
    width: 314px;
    border-collapse: collapse;
    table-layout: fixed;
    text-align: left;
    color: #666;
}

.files th {
    height: 31px;
    padding: 0 0 6px 6px;
    font-weight: normal;
    color: #44566c;
}

.files th:first-child {
    width: 123px;
}

.files th:nth-child(2) {
    width: 119px;
    background: linear-gradient(#e5e5e5, #e5e5e5) 100% 0 / 1px 26px no-repeat;
}

.files td {
    height: 21px;
    padding: 0 0 0 6px;
    white-space: nowrap;
}

.files-scroll {
    display: flex;
    align-items: center;
    justify-content: space-between;
    gap: 4px;
    padding: 0 3px 0 8px;
    background: #f0f0f0;
    color: #333;
}

.files-scroll .thumb {
    width: 331px;
    height: 15px;
    margin-right: auto;
    background: #cdcdcd;
}

.file-row {
    display: flex;
    align-items: center;
    justify-content: flex-end;
    padding: 9px 17px 0;
}

.file-row .combo {
    height: 24px;
}

.file-name {
    width: 218px;
    margin: 0 12px 0 5px;
}

.file-type {
    width: 188px;
}

.file-actions {
    display: flex;
    justify-content: flex-end;
    gap: 14px;
    padding: 6px 18px 13px;
}

.file-actions .btn {
    width: 86px;
    height: 24px;
    padding-bottom: 1px;
}

.file-actions .open {
    display: flex;
    align-items: center;
    justify-content: flex-end;
    gap: 20px;
}

.file-row .combo svg {
    top: 9px;
}

/* archive dialog */

.archive {
    left: 413px;
    top: 128px;
    width: 454px;
    border: 1px solid #8a8a8a;
}

.archive .titlebar {
    padding-right: 17px;
}

.question {
    margin-right: 31px;
    font-size: 13px;
}

.tabs {
    display: flex;
    padding: 7px 6px 0;
}

.tabs button {
    height: 20px;
    padding: 0 7px;
    border: 1px solid #dcdcdc;
    border-bottom: none;
    background: #fff;
}

.page {
    margin: 0 8px 0 6px;
    padding: 9px 14px 25px 18px;
    border: 1px solid #dcdcdc;
    background: #fff;
}

.line {
    display: flex;
    justify-content: space-between;
}

.name-line {
    align-items: center;
    padding-right: 1px;
    margin-bottom: 4px;
}

.name-line .btn {
    width: 100px;
    padding-left: 38px;
}

.caption {
    height: 22px;
    padding: 7px 0;
}

.profile {
    width: 120px;
}

.update {
    width: 200px;
}

.columns {
    display: grid;
    grid-template-columns: 1fr 1fr;
    gap: 12px;
    margin-top: 23px;
}

.col {
    display: flex;
    flex-direction: column;
}

.col fieldset {
    margin: -9px 0 10px;
    padding: 7px 8px 11px;
    border: 1px solid #dcdcdc;
}

.col legend {
    padding: 0 1px;
}

.col fieldset label {
    display: flex;
    align-items: center;
    gap: 3px;
}

.col fieldset input {
    appearance: none;
    width: 13px;
    height: 13px;
    border: 1px solid #333;
    border-radius: 50%;
    background: #333;
    box-shadow: inset 0 0 0 2px #fff;
}

.col > label {
    padding-bottom: 1px;
}

.col .combo {
    margin-bottom: 10px;
}

.col > .combo:last-child {
    margin-bottom: 0;
}

.options {
    flex: 1;
    margin-bottom: 26px;
    border: 1px solid #dcdcdc;
}

.col .btn {
    margin-right: 1px;
}

.archive footer {
    display: flex;
    justify-content: flex-end;
    gap: 8px;
    padding: 8px 7px;
}

.archive footer .btn {
    width: 73px;
}

/* password dialog */

.password {
    left: 474px;
    top: 152px;
    width: 332px;
    padding-bottom: 10px;
    border: 1px solid #555;
}

.password .titlebar {
    color: #000;
}

.password .close {
    color: #000;
}

.password p {
    padding: 13px 0 40px;
    text-align: center;
}

.group {
    display: flex;
    flex-direction: column;
    margin: 0 7px 13px 8px;
    padding: 11px 10px 14px 9px;
    border: 1px solid #dcdcdc;
}

.group > label {
    margin-bottom: 3px;
}

.group .combo {
    margin-bottom: 8px;
}

.group input[type="password"] {
    padding: 2px 5px 3px;
    border: 1px solid #7a7a7a;
    background: #fff;
    font-family: "Liberation Sans", sans-serif;
    font-size: 20px;
}

.group > input[type="password"] {
    height: 21px;
    margin-bottom: 15px;
}

.group .combo input {
    border-color: #0078d7;
}

.group ::selection {
    background: #0078d7;
    color: #fff;
}

.group > .check {
    display: flex;
    align-items: center;
    gap: 3px;
    margin-bottom: 6px;
}

.check input {
    appearance: none;
    width: 13px;
    height: 13px;
    border: 1px solid #333;
    background: #fff;
}

.organize {
    margin: 43px 0 0 1px;
}

.password footer {
    display: flex;
    gap: 15px;
    padding: 0 9px;
}

.password footer .btn {
    width: 94px;
}

.password .default {
    border: 2px solid #0078d7;
}

/* watermark */

.watermark {
    position: absolute;
    right: 49px;
    bottom: 8px;
    display: flex;
    align-items: center;
    gap: 5px;
    color: rgba(255, 255, 255, 0.5);
    font-family: "Liberation Sans Narrow", "Roboto", sans-serif;
    font-size: 32px;
    line-height: 40px;
}

/* taskbar */

.taskbar {
    display: flex;
    height: 40px;
    background: linear-gradient(90deg, #001a22, #00101f 60%, #000714);
    color: #fff;
}

.taskbar > button {
    display: flex;
    align-items: center;
    justify-content: center;
    width: 49px;
}

.taskbar > .start {
    width: 48px;
}

.task-search {
    display: flex;
    align-items: center;
    gap: 10px;
    width: 288px;
    padding-left: 12px;
    background: #f2f2f2;
    color: #333;
}

.task-search input {
    flex: 1;
    font-size: 14px;
}

.taskbar > .running {
    background: linear-gradient(#76b9ed, #76b9ed) 50% 100% / 39px 2px no-repeat;
}

.taskbar > .active {
    background: linear-gradient(#76b9ed, #76b9ed) 50% 100% / 100% 2px no-repeat #3b474e;
}

.tray {
    display: flex;
    align-items: center;
    gap: 9px;
    margin-left: auto;
    margin-right: 4px;
    padding-right: 20px;
    border-right: 1px solid #555b66;
}

.clock {
    display: flex;
    flex-direction: column;
    align-items: center;
    line-height: 18px;
}

.notes {
    margin-left: 9px;
}
```
